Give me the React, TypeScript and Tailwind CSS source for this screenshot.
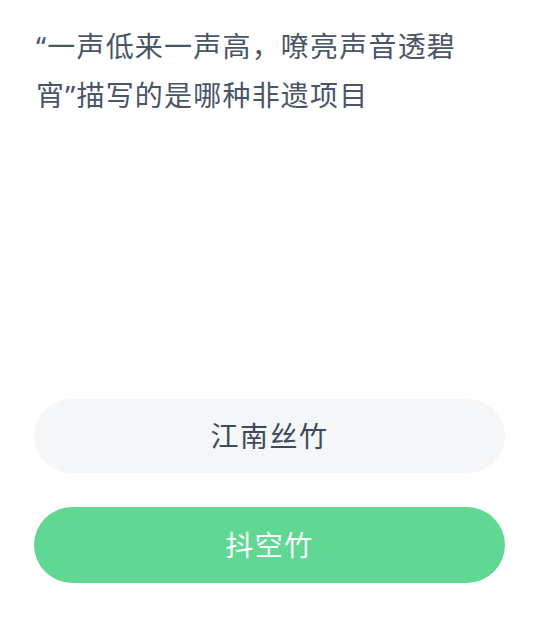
export default function App() {
  return (
    <div
      className="flex h-[617px] w-[543px] flex-col bg-white pl-[34px] pr-[38px]"
      style={{ fontFamily: '"Noto Sans", "Noto Sans CJK SC", sans-serif' }}
    >
      <p className="mt-[22px] pl-[2px] text-[28px] leading-[49px] tracking-[1.2px] text-[#4a5568]">
        “一声低来一声高，嘹亮声音透碧宵”描写的是哪种非遗项目
      </p>
      <div className="mt-auto mb-[34px] flex flex-col gap-[34px]">
        <button
          type="button"
          className="h-[74px] w-full rounded-full bg-[#f4f6f8] text-[28px] tracking-[1.5px] text-[#3f4a5a]"
        >
          江南丝竹
        </button>
        <button
          type="button"
          className="h-[76px] w-full rounded-full bg-[#60d893] text-[28px] tracking-[1.5px] text-white"
        >
          抖空竹
        </button>
      </div>
    </div>
  );
}
